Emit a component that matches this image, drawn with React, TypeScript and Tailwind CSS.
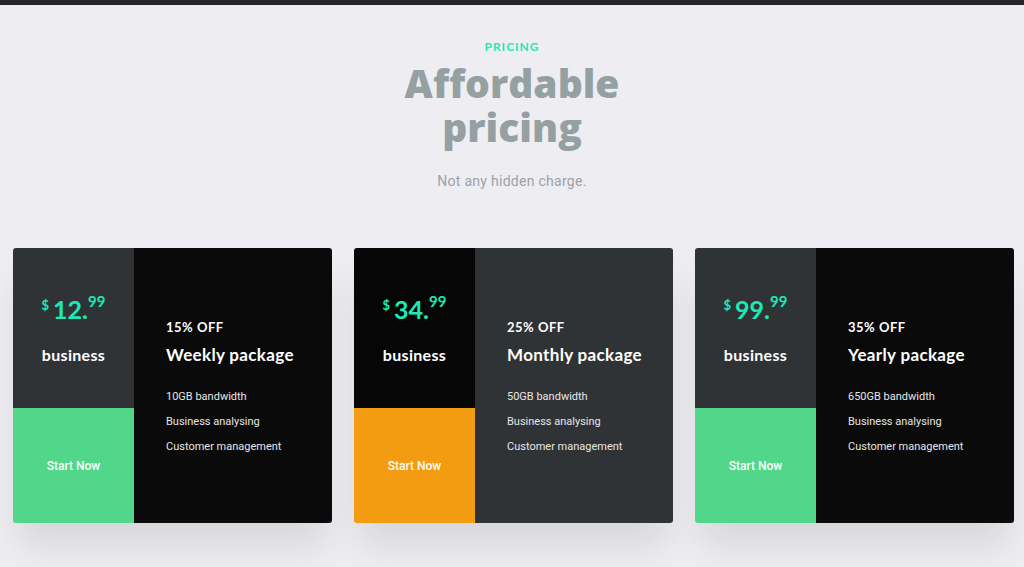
import React from 'react';

const plans = [
  { price: '12', cents: '99', off: '15% OFF', name: 'Weekly package', bw: '10GB bandwidth', left: 'bg-[#303336]', right: 'bg-[#0a0a0b]', btn: 'bg-[#52d68a]' },
  { price: '34', cents: '99', off: '25% OFF', name: 'Monthly package', bw: '50GB bandwidth', left: 'bg-[#060606]', right: 'bg-[#303336]', btn: 'bg-[#f39c12]' },
  { price: '99', cents: '99', off: '35% OFF', name: 'Yearly package', bw: '650GB bandwidth', left: 'bg-[#303336]', right: 'bg-[#0a0a0b]', btn: 'bg-[#52d68a]' },
];

export default function App() {
  return (
    <div className="min-h-screen bg-[#eeeef2] font-['Roboto',sans-serif]">
      <div className="h-[5px] bg-[#25262b]" />

      {/* Heading */}
      <section className="pt-[29px] text-center">
        <span className="text-[12px] font-bold tracking-[0.08em] text-[#1de9b6] font-['Lato',sans-serif]">PRICING</span>
        <h2 className="mt-[3px] text-[39px] leading-[44px] font-extrabold text-[#95a0a3] font-['Open_Sans',sans-serif]">
          Affordable<br />pricing
        </h2>
        <p className="mt-[22px] text-[14px] tracking-[0.02em] text-[#9ca1a6]">Not any hidden charge.</p>
      </section>

      {/* Cards */}
      <section className="mt-[56px] pl-[13px] pr-[10px] grid grid-cols-3 gap-[22px]">
        {plans.map((p, i) => (
          <div key={i} className="flex h-[275px] rounded-[3px] overflow-hidden shadow-[0_28px_36px_-6px_rgba(0,0,0,0.10)]">
            <div className="w-[121px] flex flex-col">
              <div className={`${p.left} h-[160px] flex flex-col items-center pt-[46px] font-['Lato',sans-serif]`}>
                <div className="flex items-start text-[#1de9b6] font-bold">
                  <span className="text-[13px] mt-[2px] mr-[4px]">$</span>
                  <span className="text-[25px] leading-[30px]">{p.price}.</span>
                  <span className="text-[15px] leading-[15px]">{p.cents}</span>
                </div>
                <div className="mt-[19px] text-[16px] font-bold text-white tracking-[0.02em]">business</div>
              </div>
              <div className={`${p.btn} flex-1 flex items-center justify-center text-[12px] font-medium text-white`}>
                Start Now
              </div>
            </div>
            <div className={`${p.right} flex-1 pl-[32px] pt-[71px]`}>
              <div className="text-[13px] leading-[16px] font-bold text-white tracking-[0.04em] font-['Lato',sans-serif]">{p.off}</div>
              <div className="mt-[9px] text-[17px] leading-[22px] font-bold text-white tracking-[0.02em] font-['Lato',sans-serif]">{p.name}</div>
              <ul className="mt-[23px] text-[11px] text-[#e6e6e6] space-y-[10px]">
                <li className="leading-[15px]">{p.bw}</li>
                <li className="leading-[15px]">Business analysing</li>
                <li className="leading-[15px]">Customer management</li>
              </ul>
            </div>
          </div>
        ))}
      </section>
    </div>
  );
}
